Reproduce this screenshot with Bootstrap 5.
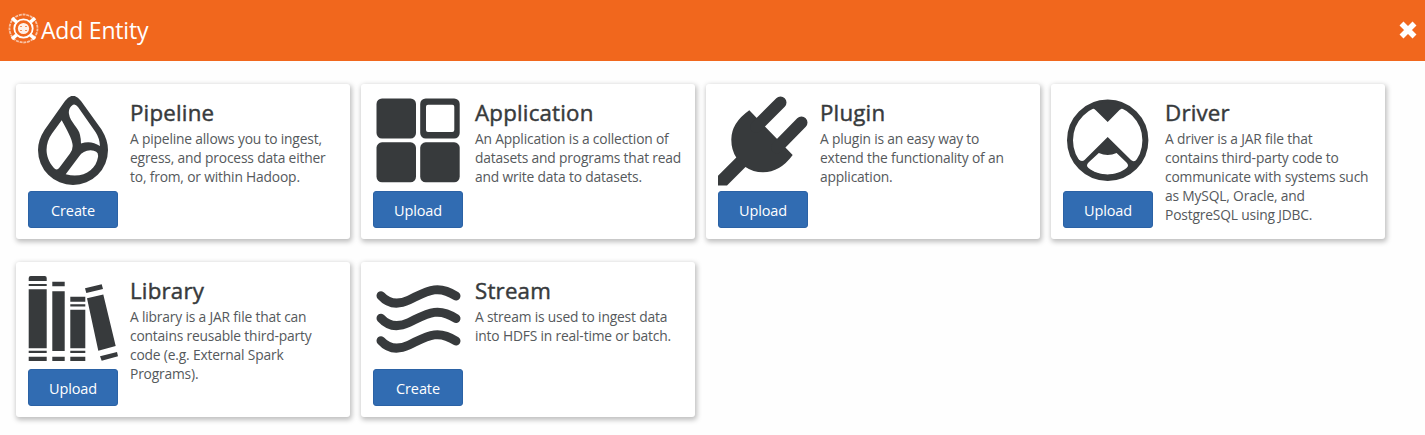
<!DOCTYPE html>
<html lang="en">
<head>
<meta charset="utf-8">
<title>Add Entity</title>
<link href="https://cdn.jsdelivr.net/npm/bootstrap@5.3.0/dist/css/bootstrap.min.css" rel="stylesheet">
<style>
body{font-family:"Open Sans","Noto Sans",sans-serif;background:#fefefe;color:#373a3c;overflow:hidden}
.topbar{height:60.5px;background:#f1671d;color:#fff;padding:0 8px 0 8px}
.topbar h1{font-size:23px;font-weight:400;letter-spacing:-.2px;margin:1px 0 0 2px;line-height:1}
.entities{display:grid;grid-template-columns:repeat(4,334px);gap:23px 11px;padding:23.5px 16px}
.entity{height:155px;padding:12px;border:0;border-radius:3px;background:#fff;box-shadow:1px 2px 5px 1px rgba(0,0,0,.25)}
.entity svg{width:90px;height:90px;fill:#373a3c;display:block}
.btn-entity{width:90px;height:37px;margin-top:5px;padding:3px 0 0;line-height:1;font-size:14.5px;letter-spacing:-.1px;color:#fff;background:#316cb2;border:1px solid #2b62a5;border-radius:3px}
.btn-entity:hover{color:#fff;background:#2b62a5}
.entity h2{font-size:22.3px;font-weight:500;line-height:26px;margin:4px 0 3px;letter-spacing:.2px;-webkit-text-stroke:.45px}
.entity p{font-size:13.8px;line-height:19px;margin:0;letter-spacing:-.17px;white-space:nowrap;color:#55595c}
.ln{fill:none;stroke:#373a3c}
</style>
</head>
<body>
<header class="topbar d-flex align-items-center">
  <svg width="31" height="31" viewBox="0 0 31 31" fill="none" stroke="#fff" style="margin-bottom:4px">
    <circle cx="15.5" cy="15.5" r="14" stroke-width="1.800" stroke-dasharray="3 .8" opacity=".6"/>
    <circle cx="15.5" cy="15.5" r="9.2" stroke-width="1.8"/>
    <circle cx="15.5" cy="15.5" r="5.6" fill="#fff" stroke="none" opacity=".9"/>
    <path d="M4 5l4.5 4M27 5l-4.500 4M4 26l4.500-4M27 26l-4.500-4" stroke-width="3.600"/>
    <path d="M12 13.500h2m3 0h2m-7 4h2m3 0h2" stroke="#f1671d" stroke-width=".7"/>
  </svg>
  <h1>Add Entity</h1>
  <svg class="ms-auto" width="18" height="18" viewBox="0 0 18 18" stroke="#fff" stroke-width="5.600"><path d="M2.500 2.500l13 13m0-13l-13 13"/></svg>
</header>
<main class="entities">
  <article class="entity card flex-row gap-2">
    <div class="me-1"><svg viewBox="0 0 90 90"><path fill-rule="evenodd" d="M37 5Q45-5.500 53 5L73.500 33.500Q80 44 80 54A35 35 0 0 1 10 54Q10 44 16.500 34ZM33.700 24.300L24 37.500C17 47 16 61 25.500 71.500Q28.700 75.500 31.500 71.500L42 57.500Q46 52 44 46Q43 41 33.700 24.300ZM45 8.700Q40 12 41 18C42 26 51 32 52 39Q53 43 53 47.500Q63 44 72 50Q71.500 42 67.500 36L50 11Q47.500 7.500 45 8.700ZM37.700 78.300L51 60.500Q55 54.500 62.500 54.300Q71 54.500 70 61C68 74 55 83 37.700 78.300Z"/></svg>
    <button class="btn btn-entity">Create</button></div>
    <div><h2>Pipeline</h2><p>A pipeline allows you to ingest,<br>egress, and process data either<br>to, from, or within Hadoop.</p></div>
  </article>
  <article class="entity card flex-row gap-2">
    <div class="me-1"><svg viewBox="0 0 90 90"><rect x="3.500" y="2.500" width="39.500" height="40" rx="5.500"/><rect x="3.500" y="46.300" width="39.500" height="40" rx="5.500"/><rect x="47.200" y="46.300" width="39.500" height="40" rx="5.500"/><path fill-rule="evenodd" d="M52.700 2.500h28.500a5.500 5.500 0 0 1 5.500 5.500v29a5.500 5.500 0 0 1-5.500 5.500h-28.500a5.500 5.500 0 0 1-5.500-5.500v-29a5.500 5.500 0 0 1 5.500-5.500zM55 8.800a2 2 0 0 0-2 2v23.200a2 2 0 0 0 2 2h24.300a2 2 0 0 0 2-2v-23.200a2 2 0 0 0-2-2z"/></svg>
    <button class="btn btn-entity">Upload</button></div>
    <div><h2>Application</h2><p>An Application is a collection of<br>datasets and programs that read<br>and write data to datasets.</p></div>
  </article>
  <article class="entity card flex-row gap-2">
    <div class="me-1"><svg viewBox="0 0 90 90"><path d="M31.300 14.300L74.700 59Q62 76.300 45 76.300Q35 76.300 27.500 71L9 89.500H0V79.800L18.300 61.500Q13.300 54 13.300 43.500Q13.300 27 31.300 14.300Z"/><path class="ln" d="M38 31L62.500 6.500M59 51.500L83.500 26.500" stroke-width="12" stroke-linecap="round"/></svg>
    <button class="btn btn-entity">Upload</button></div>
    <div><h2>Plugin</h2><p>A plugin is an easy way to<br>extend the functionality of an<br>application.</p></div>
  </article>
  <article class="entity card flex-row gap-2">
    <div class="me-1"><svg viewBox="0 0 90 90"><circle class="ln" cx="44.700" cy="44.200" r="37.700" stroke-width="6"/><path d="M27 12.500Q30.500 11.500 32.500 14L44.700 26L56.500 14Q59 11.500 63 12.500Q45 0 27 12.500Z"/><path fill-rule="evenodd" d="M44.700 41L21.500 64Q19 66 15 63.500L18 72Q44 96 71 72L75 63.500Q70.500 66.500 68 64ZM35.800 57Q44.700 61 53.600 57L63.500 66.500Q66.500 69.500 63.500 72C53 80.500 36 80.500 25.500 72Q22.500 69.500 25.500 66.500Z"/></svg>
    <button class="btn btn-entity">Upload</button></div>
    <div><h2>Driver</h2><p>A driver is a JAR file that<br>contains third-party code to<br>communicate with systems such<br>as MySQL, Oracle, and<br>PostgreSQL using JDBC.</p></div>
  </article>
  <article class="entity card flex-row gap-2">
    <div class="me-1"><svg viewBox="0 0 90 90"><path d="M.700 4Q.700 2 2.700 2h14q2 0 2 2v3h-18zM.700 10h18v2h-18zM.700 15.300h18v59h-18zM.700 76.700h18v2.300h-18zM.700 82.700h18v4.300h-18zM24.300 7.700h12.400v4.600h-12.400zM24.300 17.300h12.400v59.700h-12.400zM24.300 82.700h12.400v4.300h-12.400zM42.300 22.700h15v5h-15zM42.300 30.300h15v2.200h-15zM42.300 35.700h15v38.600h-15zM42.300 76.700h15v2.300h-15zM42.300 82.700h15v4.300h-15zM57 14.200L73.700 10.200L75 14.900L58.300 19zM59 24.300L75.300 20.500L87.700 72L70.300 76.700zM72 82.200L89 78L90 82.300L73.700 86.700z"/></svg>
    <button class="btn btn-entity">Upload</button></div>
    <div><h2>Library</h2><p>A library is a JAR file that can<br>contains reusable third-party<br>code (e.g. External Spark<br>Programs).</p></div>
  </article>
  <article class="entity card flex-row gap-2">
    <div class="me-1"><svg viewBox="0 0 90 90"><g class="ln" stroke-width="9" stroke-linecap="round"><path d="M8 21.700C15 29.500 24 31.500 36 26C53 18 64 9.500 83 22"/><path d="M8 44.200C15 52 24 54 36 48.500C53 40.500 64 32 83 44.500"/><path d="M8 66.700C15 74.500 24 76.500 36 71C53 63 64 54.500 83 67"/></g></svg>
    <button class="btn btn-entity">Create</button></div>
    <div><h2>Stream</h2><p>A stream is used to ingest data<br>into HDFS in real-time or batch.</p></div>
  </article>
</main>
<script src="https://cdn.jsdelivr.net/npm/bootstrap@5.3.0/dist/js/bootstrap.bundle.min.js"></script>
</body>
</html>
